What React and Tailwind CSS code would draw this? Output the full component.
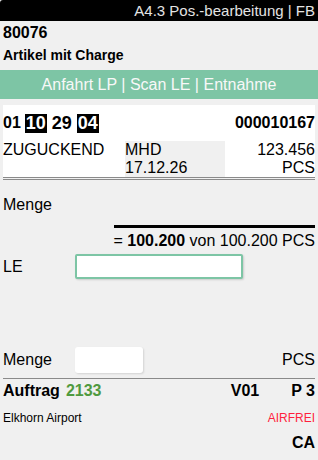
export default function App() {
  return (
    <div className="w-[318px] h-[460px] bg-[#f0f0f0] text-black overflow-hidden" style={{ fontFamily: '"Liberation Sans", Arial, sans-serif' }}>
      {/* TITLE BAR */}
      <div className="h-[21px] bg-black rounded-tl-[3px] text-right pr-[3px] text-[15px] leading-[21px] text-[#e4e4e4]">
        A4.3 Pos.-bearbeitung | FB
      </div>

      {/* ARTICLE HEADER */}
      <div className="h-[49px] px-[3px] pt-[2px]">
        <div className="text-[16px] leading-[20px] font-bold">80076</div>
        <div className="mt-[3px] text-[14px] leading-[18px] font-bold">Artikel mit Charge</div>
      </div>

      {/* STEP BAR */}
      <div className="h-[29px] bg-[#7dc5a5] text-center text-[16px] leading-[29px] text-[#f8f8f8]">
        Anfahrt LP | Scan LE | Entnahme
      </div>

      <div className="px-[3px] pt-[6px]">
        {/* LOCATION CARD */}
        <div className="h-[36px] bg-white flex items-center justify-between font-bold">
          <div className="flex items-center gap-[4px]">
            <span className="text-[16px] leading-[20px]">01</span>
            <span className="bg-black text-white text-[18px] leading-[19px] px-[1px]">10</span>
            <span className="text-[18px] leading-[19px] px-[1px]">29</span>
            <span className="bg-black text-white text-[18px] leading-[19px] px-[1px]">04</span>
          </div>
          <span className="text-[16px] leading-[20px]">000010167</span>
        </div>
        <div className="h-[39px] grid grid-cols-[122px_100px_1fr] border-b-[3px] border-double border-[#8a8a8a] text-[16px] leading-[18px]">
          <div className="bg-white">ZUGUCKEND</div>
          <div>
            <div>MHD</div>
            <div>17.12.26</div>
          </div>
          <div className="bg-white text-right">
            <div>123.456</div>
            <div>PCS</div>
          </div>
        </div>

        {/* QUANTITY */}
        <div className="mt-[15px] text-[16px] leading-[20px]">Menge</div>
        <div className="mt-[10px] ml-[111px] h-[3px] bg-black" />
        <div className="mt-[3px] text-right text-[16px] leading-[20px]">
          = <span className="font-bold">100.200</span> von 100.200 PCS
        </div>

        {/* LE INPUT */}
        <div className="mt-[3px] h-[25px] flex items-center">
          <span className="w-[72px] text-[16px] leading-[20px]">LE</span>
          <input className="w-[168px] h-[25px] bg-white border-2 border-[#7dc5a5] rounded-[2px] shadow-[1px_1px_2px_rgba(0,0,0,0.15)] outline-none" />
        </div>

        {/* MENGE INPUT */}
        <div className="mt-[68px] h-[26px] flex items-center">
          <span className="w-[72px] text-[16px] leading-[20px]">Menge</span>
          <input className="w-[68px] h-[26px] bg-white rounded-[3px] shadow-[1px_1px_2px_rgba(0,0,0,0.12)] outline-none" />
          <span className="ml-auto text-[16px] leading-[20px]">PCS</span>
        </div>

        <div className="mt-[5px] border-t border-[#8a8a8a]" />

        {/* ORDER INFO */}
        <div className="mt-[2px] flex items-center text-[16px] leading-[20px] font-bold">
          <span>Auftrag</span>
          <span className="ml-[6px] text-[#4f9a3f]">2133</span>
          <span className="ml-auto">V01</span>
          <span className="ml-[32px]">P 3</span>
        </div>
        <div className="mt-[9px] flex justify-between text-[12px] leading-[16px]">
          <span>Elkhorn Airport</span>
          <span className="text-[#ff1f3d]">AIRFREI</span>
        </div>
        <div className="mt-[7px] text-right text-[16px] leading-[20px] font-bold">CA</div>
      </div>
    </div>
  );
}
